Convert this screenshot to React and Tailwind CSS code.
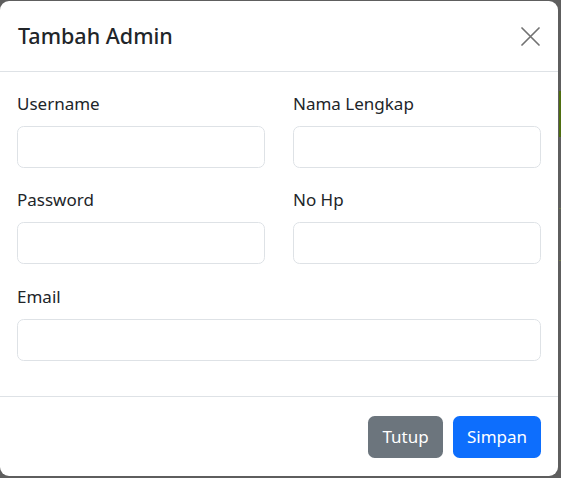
import React from 'react';

const fields = [
  { label: 'Username', span: false, mb: 'mb-[18px]' },
  { label: 'Nama Lengkap', span: false, mb: 'mb-[18px]' },
  { label: 'Password', span: false, mb: 'mb-[19px]' },
  { label: 'No Hp', span: false, mb: 'mb-[19px]' },
  { label: 'Email', span: true, mb: 'mb-[18px]' },
];

const Field = ({ label, span, mb }) => (
  <div className={span ? `col-span-2 ${mb}` : mb}>
    <label className="block text-[17px] leading-[27px] mb-[9px] text-[#212529]">{label}</label>
    <input
      type="text"
      className="block w-full h-[42px] rounded-[6.6px] border border-[#dee2e6] bg-white outline-none"
    />
  </div>
);

export default function App() {
  return (
    <div
      className="w-[561px] h-[478px] bg-[#5e5e5e] flex pt-px overflow-hidden"
      style={{ fontFamily: '"Noto Sans", "Open Sans", sans-serif' }}
    >
      {/* modal */}
      <div className="w-[558px] h-[475px] bg-white rounded-[9px] flex flex-col shrink-0 overflow-hidden">
        <div className="h-[71px] border-b border-[#dee2e6] flex items-center justify-between pl-[18px] pr-[18px] shrink-0">
          <h5 className="text-[21.5px] font-medium text-[#212529] leading-none">Tambah Admin</h5>
          <svg width="19" height="19" viewBox="0 0 19 19" className="mt-px">
            <path d="M1 1 L18 18 M18 1 L1 18" stroke="#727272" strokeWidth="1.7" strokeLinecap="round" />
          </svg>
        </div>

        <div className="px-[17px] pt-[18px] pb-[17px] grid grid-cols-2 gap-x-[28px] shrink-0">
          {fields.map((f) => (
            <Field key={f.label} label={f.label} span={f.span} mb={f.mb} />
          ))}
        </div>

        <div className="flex-1 border-t border-[#dee2e6] flex items-center justify-end gap-[10px] pr-[17px]">
          <button className="w-[75px] h-[42px] rounded-[6.6px] bg-[#6c757d] text-white text-[17px]">Tutup</button>
          <button className="w-[88px] h-[42px] rounded-[6.6px] bg-[#0d6efd] text-white text-[17px]">Simpan</button>
        </div>
      </div>

      {/* page behind the backdrop */}
      <div className="flex-1 flex flex-col ml-px">
        <div className="h-[90px]" />
        <div className="h-[46px] bg-[#4f6e10]" />
        <div className="h-[71px]" />
        <div className="h-px bg-[#6f7a4a]" />
        <div className="h-[51px]" />
        <div className="h-px bg-[#6f7a4a]" />
      </div>
    </div>
  );
}
